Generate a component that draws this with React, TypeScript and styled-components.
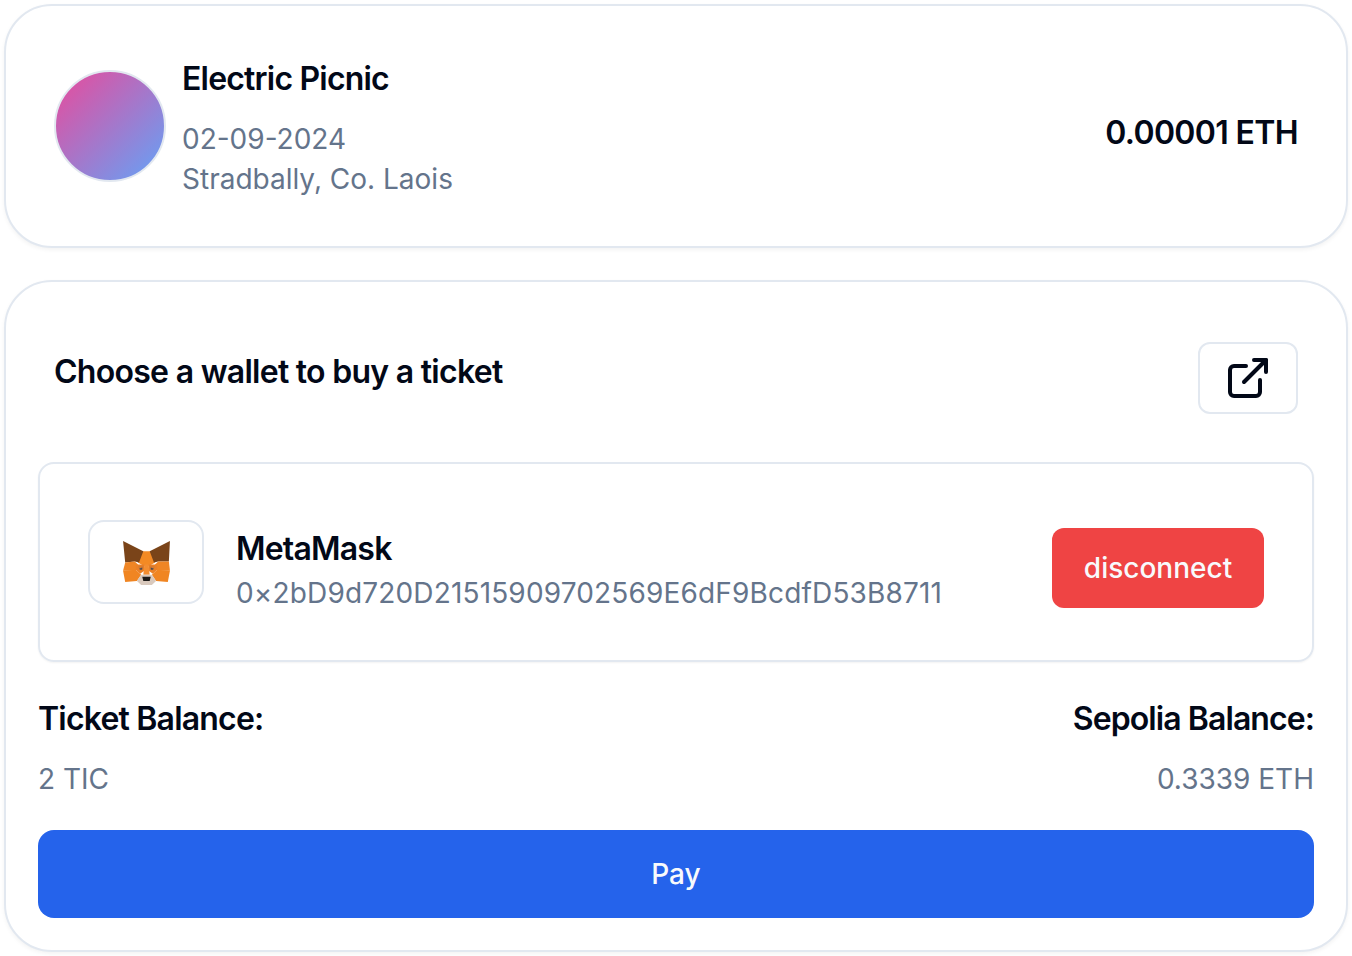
import React from "react";
import styled, { createGlobalStyle } from "styled-components";

const Global = createGlobalStyle`
  html, body { margin: 0; padding: 0; background: #fff; }
  body { font-family: Inter, "Liberation Sans", sans-serif; color: #020817; }
  * { box-sizing: border-box; }
`;

const Page = styled.main`
  width: 1352px;
  padding: 4px;
  display: flex;
  flex-direction: column;
  gap: 32px;
`;

const Card = styled.section`
  background: #fff;
  border: 2px solid #e2e8f0;
  border-radius: 48px;
  box-shadow: 0 2px 4px rgba(0, 0, 0, 0.05);
`;

const EventCard = styled(Card)`
  height: 244px;
  padding: 0 48px;
  display: flex;
  justify-content: space-between;
  align-items: center;
`;

const EventInfo = styled.div`
  display: flex;
  align-items: center;
  gap: 16px;
`;

const Avatar = styled.div`
  width: 112px;
  height: 112px;
  border-radius: 50%;
  border: 2px solid #e2e8f0;
  background: linear-gradient(135deg, #ec4899 0%, #60a5fa 100%);
  background-origin: border-box;
  flex: none;
`;

const EventText = styled.div`
  display: flex;
  flex-direction: column;
  margin-top: 6px;
`;

const Title = styled.h2`
  margin: 0;
  font-size: 32px;
  line-height: 40px;
  font-weight: 600;
  letter-spacing: -0.8px;
  color: #020817;
`;

const Muted = styled.p`
  margin: 0;
  font-size: 28px;
  line-height: 40px;
  font-weight: 400;
  color: #64748b;
`;

const EventMuted = styled(Muted)`
  &:first-of-type { margin-top: 20px; }
`;

const Price = styled(Title)`
  margin-top: 14px;
  letter-spacing: -0.65px;
`;

const WalletCard = styled(Card)`
  height: 672px;
  padding: 32px;
  display: flex;
  flex-direction: column;
`;

const WalletHeader = styled.header`
  display: flex;
  justify-content: space-between;
  align-items: flex-start;
  padding: 28px 16px 0;
  height: 148px;
`;

const Heading = styled(Title)`
  margin-top: 10px;
  letter-spacing: -0.72px;
`;

const IconButton = styled.button`
  width: 100px;
  height: 72px;
  padding: 0;
  background: #fff;
  border: 2px solid #e2e8f0;
  border-radius: 12px;
  display: flex;
  align-items: center;
  justify-content: center;
  color: #020817;
`;

const WalletRow = styled.div`
  height: 200px;
  border: 2px solid #e2e8f0;
  border-radius: 16px;
  box-shadow: 0 1px 2px rgba(0, 0, 0, 0.05);
  padding: 0 48px;
  display: flex;
  align-items: center;
`;

const LogoBox = styled.div`
  width: 116px;
  height: 84px;
  border: 2px solid #e2e8f0;
  border-radius: 16px;
  display: flex;
  align-items: center;
  justify-content: center;
  flex: none;
`;

const WalletText = styled.div`
  flex: 1;
  margin: 14px 0 0 32px;
  display: flex;
  flex-direction: column;
`;

const WalletName = styled(Title)`
  line-height: 48px;
`;

const Address = styled(Muted)`
  line-height: 40px;
  letter-spacing: 0.16px;
`;

const Disconnect = styled.button`
  width: 212px;
  height: 80px;
  margin-top: 12px;
  border: 0;
  border-radius: 12px;
  background: #ef4444;
  color: #f8fafc;
  font: 500 28px/40px Inter, sans-serif;
`;

const Balances = styled.div`
  display: grid;
  grid-template-columns: 1fr 1fr;
  padding-top: 37px;
`;

const BalanceColumn = styled.div<{ $right?: boolean }>`
  display: flex;
  flex-direction: column;
  text-align: ${(p) => (p.$right ? "right" : "left")};
`;

const BalanceValue = styled(Muted)`
  margin-top: 20px;
`;

const SepoliaLabel = styled(Title)`
  letter-spacing: -0.92px;
`;

const PayButton = styled.button`
  margin-top: 31px;
  height: 88px;
  border: 0;
  border-radius: 16px;
  background: #2563eb;
  color: #f8fafc;
  font: 500 28px/40px Inter, sans-serif;
`;

const Fox = () => (
  <svg width="49" height="45" viewBox="0 0 46 44" preserveAspectRatio="none" aria-hidden="true">
    <polygon points="19,11 27,11 31,22 23,27 15,22" fill="#f38a24" />
    <polygon points="1,1 20,11 16,22 12,21 3,22" fill="#7a4419" />
    <polygon points="45,1 26,11 30,22 34,21 44,21" fill="#7a4419" />
    <polygon points="3,22 12,21 15,24 13,30 1,30" fill="#ef8524" />
    <polygon points="44,21 34,21 31,24 33,30 45,30" fill="#ef8524" />
    <polygon points="1,30 13,29 18,34 14,40 3,41" fill="#f08522" />
    <polygon points="45,30 33,29 28,34 32,40 43,41" fill="#f08522" />
    <polygon points="13,24 21,24 21,30 17,33 13,29" fill="#ea8026" />
    <polygon points="33,24 25,24 25,30 29,33 33,29" fill="#ea8026" />
    <polygon points="15,26 20,25 20,28 16,28" fill="#d67a30" />
    <polygon points="31,26 26,25 26,28 30,28" fill="#d67a30" />
    <polygon points="16,28 19,27 19,29 17,29" fill="#4a4c55" />
    <polygon points="30,28 27,27 27,29 29,29" fill="#4a4c55" />
    <polygon points="21,24 25,24 26,34 20,34" fill="#f38d30" />
    <polygon points="14,40 18,34 28,34 32,40 28,44 18,44" fill="#d9c9bd" />
    <polygon points="19,36 27,36 26,40 20,40" fill="#1d1a18" />
  </svg>
);

const ExternalIcon = () => (
  <svg width="48" height="48" viewBox="0 0 24 24" fill="none" stroke="currentColor" strokeWidth="2" strokeLinecap="round" strokeLinejoin="round" aria-hidden="true">
    <path d="M18 13v6a2 2 0 0 1-2 2H5a2 2 0 0 1-2-2V8a2 2 0 0 1 2-2h6" />
    <polyline points="15 3 21 3 21 9" />
    <line x1="10" y1="14" x2="21" y2="3" />
  </svg>
);

export default function App() {
  return (
    <>
      <Global />
      <Page>
        <EventCard>
          <EventInfo>
            <Avatar />
            <EventText>
              <Title>Electric Picnic</Title>
              <EventMuted>02-09-2024</EventMuted>
              <EventMuted>Stradbally, Co. Laois</EventMuted>
            </EventText>
          </EventInfo>
          <Price>0.00001 ETH</Price>
        </EventCard>
        <WalletCard>
          <WalletHeader>
            <Heading>Choose a wallet to buy a ticket</Heading>
            <IconButton aria-label="Open"><ExternalIcon /></IconButton>
          </WalletHeader>
          <WalletRow>
            <LogoBox><Fox /></LogoBox>
            <WalletText>
              <WalletName>MetaMask</WalletName>
              <Address>0×2bD9d720D21515909702569E6dF9BcdfD53B8711</Address>
            </WalletText>
            <Disconnect>disconnect</Disconnect>
          </WalletRow>
          <Balances>
            <BalanceColumn>
              <Title>Ticket Balance:</Title>
              <BalanceValue>2 TIC</BalanceValue>
            </BalanceColumn>
            <BalanceColumn $right>
              <SepoliaLabel>Sepolia Balance:</SepoliaLabel>
              <BalanceValue>0.3339 ETH</BalanceValue>
            </BalanceColumn>
          </Balances>
          <PayButton>Pay</PayButton>
        </WalletCard>
      </Page>
    </>
  );
}
